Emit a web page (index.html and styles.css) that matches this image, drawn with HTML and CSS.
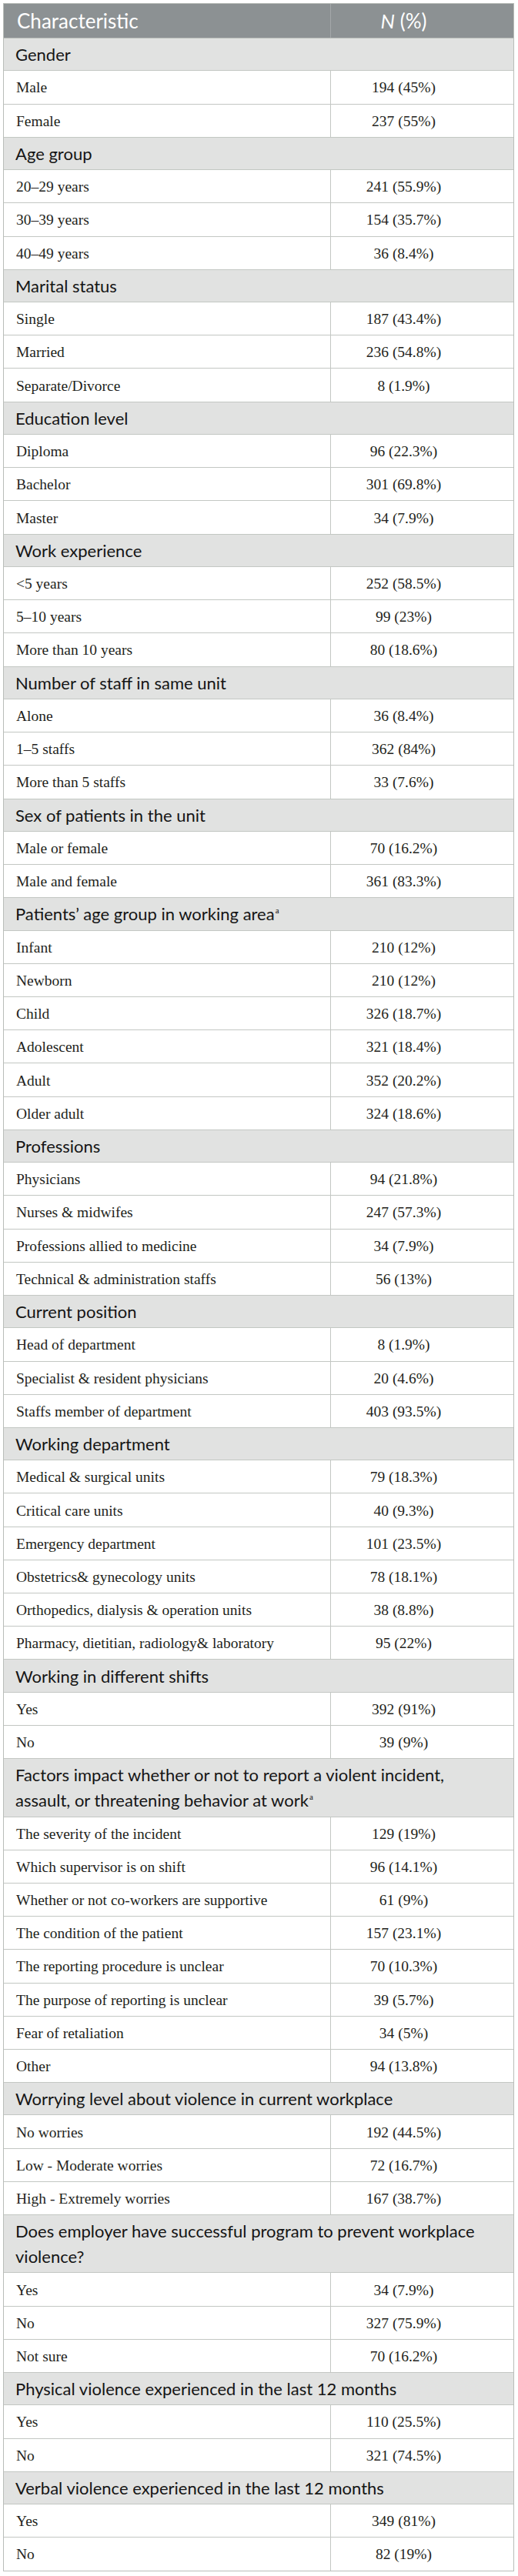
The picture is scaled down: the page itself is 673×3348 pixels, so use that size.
FILE: index.html
```html
<!DOCTYPE html>
<html lang="en">
<head>
<meta charset="utf-8">
<title>Characteristics of participants</title>
<link rel="stylesheet" href="styles.css">
</head>
<body>
<div class="tbl">
  <div class="row head"><div class="c1">Characteristic</div><div class="c2"><i>N</i>&nbsp;(%)</div></div>

  <div class="sec">Gender</div>
  <div class="row"><div class="c1">Male</div><div class="c2">194 (45%)</div></div>
  <div class="row"><div class="c1">Female</div><div class="c2">237 (55%)</div></div>

  <div class="sec">Age group</div>
  <div class="row"><div class="c1">20–29 years</div><div class="c2">241 (55.9%)</div></div>
  <div class="row"><div class="c1">30–39 years</div><div class="c2">154 (35.7%)</div></div>
  <div class="row"><div class="c1">40–49 years</div><div class="c2">36 (8.4%)</div></div>

  <div class="sec">Marital status</div>
  <div class="row"><div class="c1">Single</div><div class="c2">187 (43.4%)</div></div>
  <div class="row"><div class="c1">Married</div><div class="c2">236 (54.8%)</div></div>
  <div class="row"><div class="c1">Separate/Divorce</div><div class="c2">8 (1.9%)</div></div>

  <div class="sec">Education level</div>
  <div class="row"><div class="c1">Diploma</div><div class="c2">96 (22.3%)</div></div>
  <div class="row"><div class="c1">Bachelor</div><div class="c2">301 (69.8%)</div></div>
  <div class="row"><div class="c1">Master</div><div class="c2">34 (7.9%)</div></div>

  <div class="sec">Work experience</div>
  <div class="row"><div class="c1">&lt;5 years</div><div class="c2">252 (58.5%)</div></div>
  <div class="row"><div class="c1">5–10 years</div><div class="c2">99 (23%)</div></div>
  <div class="row"><div class="c1">More than 10 years</div><div class="c2">80 (18.6%)</div></div>

  <div class="sec">Number of staff in same unit</div>
  <div class="row"><div class="c1">Alone</div><div class="c2">36 (8.4%)</div></div>
  <div class="row"><div class="c1">1–5 staffs</div><div class="c2">362 (84%)</div></div>
  <div class="row"><div class="c1">More than 5 staffs</div><div class="c2">33 (7.6%)</div></div>

  <div class="sec">Sex of patients in the unit</div>
  <div class="row"><div class="c1">Male or female</div><div class="c2">70 (16.2%)</div></div>
  <div class="row"><div class="c1">Male and female</div><div class="c2">361 (83.3%)</div></div>

  <div class="sec"><span>Patients’ age group in working area<sup>a</sup></span></div>
  <div class="row"><div class="c1">Infant</div><div class="c2">210 (12%)</div></div>
  <div class="row"><div class="c1">Newborn</div><div class="c2">210 (12%)</div></div>
  <div class="row"><div class="c1">Child</div><div class="c2">326 (18.7%)</div></div>
  <div class="row"><div class="c1">Adolescent</div><div class="c2">321 (18.4%)</div></div>
  <div class="row"><div class="c1">Adult</div><div class="c2">352 (20.2%)</div></div>
  <div class="row"><div class="c1">Older adult</div><div class="c2">324 (18.6%)</div></div>

  <div class="sec">Professions</div>
  <div class="row"><div class="c1">Physicians</div><div class="c2">94 (21.8%)</div></div>
  <div class="row"><div class="c1">Nurses &amp; midwifes</div><div class="c2">247 (57.3%)</div></div>
  <div class="row"><div class="c1">Professions allied to medicine</div><div class="c2">34 (7.9%)</div></div>
  <div class="row"><div class="c1">Technical &amp; administration staffs</div><div class="c2">56 (13%)</div></div>

  <div class="sec">Current position</div>
  <div class="row"><div class="c1">Head of department</div><div class="c2">8 (1.9%)</div></div>
  <div class="row"><div class="c1">Specialist &amp; resident physicians</div><div class="c2">20 (4.6%)</div></div>
  <div class="row"><div class="c1">Staffs member of department</div><div class="c2">403 (93.5%)</div></div>

  <div class="sec">Working department</div>
  <div class="row"><div class="c1">Medical &amp; surgical units</div><div class="c2">79 (18.3%)</div></div>
  <div class="row"><div class="c1">Critical care units</div><div class="c2">40 (9.3%)</div></div>
  <div class="row"><div class="c1">Emergency department</div><div class="c2">101 (23.5%)</div></div>
  <div class="row"><div class="c1">Obstetrics&amp; gynecology units</div><div class="c2">78 (18.1%)</div></div>
  <div class="row"><div class="c1">Orthopedics, dialysis &amp; operation units</div><div class="c2">38 (8.8%)</div></div>
  <div class="row"><div class="c1">Pharmacy, dietitian, radiology&amp; laboratory</div><div class="c2">95 (22%)</div></div>

  <div class="sec">Working in different shifts</div>
  <div class="row"><div class="c1">Yes</div><div class="c2">392 (91%)</div></div>
  <div class="row"><div class="c1">No</div><div class="c2">39 (9%)</div></div>

  <div class="sec two"><span>Factors impact whether or not to report a violent incident, assault, or threatening behavior at work<sup>a</sup></span></div>
  <div class="row"><div class="c1">The severity of the incident</div><div class="c2">129 (19%)</div></div>
  <div class="row"><div class="c1">Which supervisor is on shift</div><div class="c2">96 (14.1%)</div></div>
  <div class="row"><div class="c1">Whether or not co-workers are supportive</div><div class="c2">61 (9%)</div></div>
  <div class="row"><div class="c1">The condition of the patient</div><div class="c2">157 (23.1%)</div></div>
  <div class="row"><div class="c1">The reporting procedure is unclear</div><div class="c2">70 (10.3%)</div></div>
  <div class="row"><div class="c1">The purpose of reporting is unclear</div><div class="c2">39 (5.7%)</div></div>
  <div class="row"><div class="c1">Fear of retaliation</div><div class="c2">34 (5%)</div></div>
  <div class="row"><div class="c1">Other</div><div class="c2">94 (13.8%)</div></div>

  <div class="sec">Worrying level about violence in current workplace</div>
  <div class="row"><div class="c1">No worries</div><div class="c2">192 (44.5%)</div></div>
  <div class="row"><div class="c1">Low - Moderate worries</div><div class="c2">72 (16.7%)</div></div>
  <div class="row"><div class="c1">High - Extremely worries</div><div class="c2">167 (38.7%)</div></div>

  <div class="sec two"><span>Does employer have successful program to prevent workplace violence?</span></div>
  <div class="row"><div class="c1">Yes</div><div class="c2">34 (7.9%)</div></div>
  <div class="row"><div class="c1">No</div><div class="c2">327 (75.9%)</div></div>
  <div class="row"><div class="c1">Not sure</div><div class="c2">70 (16.2%)</div></div>

  <div class="sec">Physical violence experienced in the last 12 months</div>
  <div class="row"><div class="c1">Yes</div><div class="c2">110 (25.5%)</div></div>
  <div class="row"><div class="c1">No</div><div class="c2">321 (74.5%)</div></div>

  <div class="sec">Verbal violence experienced in the last 12 months</div>
  <div class="row"><div class="c1">Yes</div><div class="c2">349 (81%)</div></div>
  <div class="row"><div class="c1">No</div><div class="c2">82 (19%)</div></div>
</div>
</body>
</html>
```

FILE: styles.css
```css
html, body {
  margin: 0;
  padding: 0;
  background: #ffffff;
}

.tbl {
  margin: 4px 0 0 4px;
  width: 664px;
  border: 1px solid #b9bdb9;
  border-bottom: none;
  box-sizing: border-box;
}

.row {
  display: grid;
  grid-template-columns: 424px 1fr;
  height: 43.2px;
  box-sizing: border-box;
  border-bottom: 1px solid #c3c7c3;
  font-family: "Liberation Serif", "Times New Roman", serif;
  font-size: 19.5px;
  color: #231f20;
}

.row:last-child {
  border-bottom-color: #b9bdb9;
}

.c1 {
  display: flex;
  align-items: center;
  padding-left: 16px;
  padding-top: 2px;
}

.c2 {
  display: flex;
  align-items: center;
  justify-content: center;
  border-left: 1px solid #c3c7c3;
  padding-right: 48px;
  padding-top: 2px;
}

.head {
  height: 45px;
  background: #8c9193;
  color: #ffffff;
  font-family: Lato, "Liberation Sans", sans-serif;
  font-size: 26px;
  font-weight: 400;
  border-bottom-color: #b9bdb9;
}

.head .c1 {
  padding-left: 17px;
  padding-top: 0;
}

.head .c2 {
  border-left-color: #a3a7a9;
  padding-top: 0;
}

.sec {
  display: flex;
  align-items: center;
  height: 42.4px;
  box-sizing: border-box;
  padding-left: 15px;
  padding-right: 20px;
  background: #e1e2e1;
  border-bottom: 1px solid #c3c7c3;
  font-family: Lato, "Liberation Sans", sans-serif;
  font-size: 22px;
  line-height: 33px;
  color: #151515;
}

.sec.two {
  height: 75.4px;
}

.sec sup {
  font-family: "Liberation Serif", serif;
  font-size: 11px;
  vertical-align: 9px;
  line-height: 0;
  margin-left: 1px;
}
```
